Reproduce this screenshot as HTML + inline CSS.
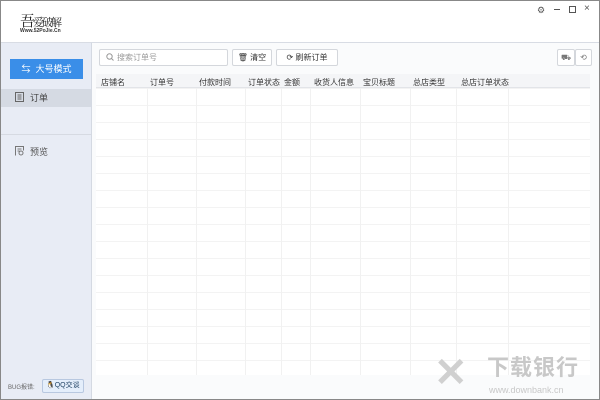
<!DOCTYPE html>
<html><head><meta charset="utf-8"><style>
*{margin:0;padding:0;box-sizing:border-box}
body{width:600px;height:400px;overflow:hidden;font-family:"Liberation Sans","Noto Sans CJK SC",sans-serif;font-size:8px;color:#333;background:#fff;position:relative}
.win{position:absolute;left:0;top:0;width:600px;height:400px;border:1px solid #888}
.abs{position:absolute}
.side{left:1px;top:42px;width:91px;height:357px;background:#e8ecf5;border-right:1px solid #d4d9e2;border-top:1px solid #d8dce4}
.content{left:92px;top:42px;width:507px;height:357px;background:#fafbfc;border-top:1px solid #d8dce4}
.btn{position:absolute;border:1px solid #d4d7dc;background:#fff;border-radius:2px;color:#333;font-size:8px;line-height:15px}
.hdr span{position:absolute;top:3px;font-size:8px;color:#333}
</style></head><body>
<div class="win"></div>
<div class="abs" style="left:20px;top:10px;font-family:'Noto Serif CJK SC',serif;font-size:15px;color:#222;letter-spacing:-2px">吾<span style="font-size:11px">爱破解</span></div>
<div class="abs" style="left:20px;top:28px;font-size:5px;color:#333;font-weight:bold">Www.52PoJie.Cn</div>
<div class="abs" style="left:537px;top:5px;font-size:9px;color:#555">⚙</div>
<div class="abs" style="left:554px;top:9px;width:6px;height:1px;background:#555"></div>
<div class="abs" style="left:569px;top:6px;width:7px;height:7px;border:1px solid #555"></div>
<div class="abs" style="left:584px;top:3px;font-size:10px;color:#555">×</div>
<div class="abs side">
 <div class="abs" style="left:9px;top:16px;width:73px;height:20px;background:#3a8ee8;color:#fff;font-size:9px;line-height:20px;text-align:center">⇆&nbsp; 大号模式</div>
 <div class="abs" style="left:0;top:46px;width:90px;height:18px;background:#d5dae3;font-size:9px;line-height:18px;padding-left:14px;color:#444"><svg width="9" height="10" style="vertical-align:-1px;margin-right:6px"><rect x="0.5" y="0.5" width="8" height="9" fill="none" stroke="#666"/><path d="M2.5 3h4M2.5 5h4M2.5 7h4" stroke="#666"/></svg>订单</div>
 <div class="abs" style="left:0;top:91px;width:90px;height:1px;background:#d6dae2"></div>
 <div class="abs" style="left:14px;top:102px;font-size:9px;color:#555"><svg width="10" height="10" style="vertical-align:-1px;margin-right:5px"><path d="M0.5 9.5V0.5h8v4" fill="none" stroke="#777"/><path d="M2.5 3h4M2.5 5h2" stroke="#777"/><circle cx="6" cy="7" r="2" fill="none" stroke="#777"/></svg>预览</div>
 <div class="abs" style="left:7px;top:339px;font-size:6px;color:#666">BUG报错:</div>
 <div class="abs" style="left:41px;top:336px;width:42px;height:14px;background:#e4eefb;border:1px solid #b8c8e0;border-radius:2px;font-size:7px;line-height:12px;color:#246;padding-left:3px">🐧QQ交谈</div>
</div>
<div class="abs content">
 <div class="btn" style="left:7px;top:6px;width:129px;height:17px;color:#999;padding-left:6px"><svg width="8" height="8" style="vertical-align:-1px;margin-right:3px"><circle cx="3.5" cy="3.5" r="2.7" fill="none" stroke="#999"/><path d="M5.5 5.5L7.5 7.5" stroke="#999"/></svg>搜索订单号</div>
 <div class="btn" style="left:140px;top:6px;width:40px;height:17px;text-align:center">🗑︎ 清空</div>
 <div class="btn" style="left:184px;top:6px;width:62px;height:17px;text-align:center">⟳ 刷新订单</div>
 <div class="btn" style="left:465px;top:6px;width:18px;height:17px;text-align:center;color:#777">⛟</div>
 <div class="btn" style="left:483px;top:6px;width:17px;height:17px;text-align:center;color:#777">⟲</div>
 <div class="abs" style="left:4px;top:31px;width:494px;height:301px;background:#fff;
 background-image:linear-gradient(#f3f3f3 1px,transparent 1px);background-size:100% 17px;background-position:0 14px"></div>
 <svg class="abs" style="left:4px;top:31px" width="494" height="301">
  <g stroke="#f1f1f1" stroke-width="1">
   <line x1="51.5" y1="0" x2="51.5" y2="301"/><line x1="100.5" y1="0" x2="100.5" y2="301"/>
   <line x1="149.5" y1="0" x2="149.5" y2="301"/><line x1="185.5" y1="0" x2="185.5" y2="301"/>
   <line x1="214.5" y1="0" x2="214.5" y2="301"/><line x1="264.5" y1="0" x2="264.5" y2="301"/>
   <line x1="314.5" y1="0" x2="314.5" y2="301"/><line x1="360.5" y1="0" x2="360.5" y2="301"/>
   <line x1="412.5" y1="0" x2="412.5" y2="301"/>
  </g>
 </svg>
 <div class="abs hdr" style="left:4px;top:31px;width:494px;height:14px;background:#f4f5f7;border-bottom:1px solid #e2e4e8">
  <span style="left:5px">店铺名</span><span style="left:54px">订单号</span><span style="left:103px">付款时间</span>
  <span style="left:152px">订单状态</span><span style="left:188px">金额</span><span style="left:218px">收货人信息</span>
  <span style="left:267px">宝贝标题</span><span style="left:317px">总店类型</span><span style="left:365px">总店订单状态</span>
 </div>
 <div class="abs" style="left:342px;top:310px;font-size:40px;line-height:40px;color:#d0d0d0;font-weight:bold">✕</div>
 <div class="abs" style="left:395px;top:312px;font-size:22px;line-height:26px;color:#c8c8c8;font-weight:bold;letter-spacing:1px">下载银行</div>
 <div class="abs" style="left:397px;top:342px;font-size:9px;color:#c8c8c8">www.downbank.cn</div>
</div>
</body></html>
